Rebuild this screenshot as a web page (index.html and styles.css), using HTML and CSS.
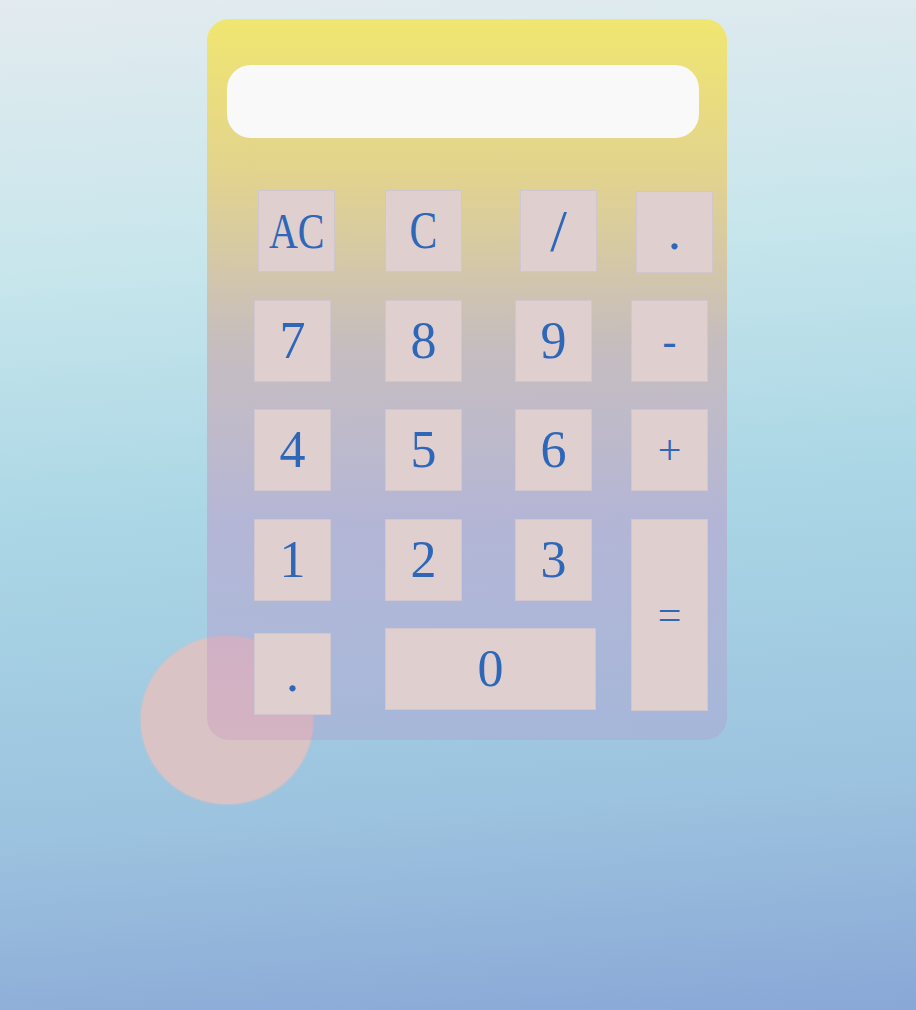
FILE: index.html
```html
<!DOCTYPE html>
<html lang="en">
<head>
<meta charset="utf-8">
<title>Calculator</title>
<link rel="stylesheet" href="styles.css">
</head>
<body>
<div class="blob"></div>
<main class="page">
  <section class="calc">
    <div class="display"></div>
    <div class="keys">
      <button class="key key-ac"><span class="narrow">AC</span></button>
      <button class="key key-c"><span class="narrow">C</span></button>
      <button class="key key-div">/</button>
      <button class="key key-top-dot">.</button>

      <button class="key">7</button>
      <button class="key">8</button>
      <button class="key">9</button>
      <button class="key key-op">-</button>

      <button class="key">4</button>
      <button class="key">5</button>
      <button class="key">6</button>
      <button class="key key-op">+</button>

      <button class="key">1</button>
      <button class="key">2</button>
      <button class="key">3</button>
      <button class="key key-op key-eq">=</button>

      <button class="key key-dot">.</button>
      <button class="key key-zero">0</button>
    </div>
  </section>
</main>
</body>
</html>
```
FILE: styles.css
```css
html, body {
  margin: 0;
  height: 100%;
}

body {
  position: relative;
  overflow: hidden;
  background: linear-gradient(176deg,
    #e3ebef 0%,
    #c8e6ec 25%,
    #aad6e5 50%,
    #9cc3df 78%,
    #8aa7d6 100%);
  font-family: "Liberation Serif", "Times New Roman", serif;
}

.blob {
  position: absolute;
  left: 141px;
  top: 636px;
  width: 172px;
  height: 168px;
  border-radius: 50%;
  background: #d9c3c4;
  box-shadow: 0 0 2px 1px rgba(217, 195, 196, 0.6);
}

.page {
  position: relative;
  padding: 19px 0 0 207px;
}

.calc {
  width: 520px;
  height: 721px;
  box-sizing: border-box;
  border-radius: 22px;
  padding: 46px 28px 0 20px;
  background: linear-gradient(180deg,
    rgba(240, 230, 112, 1) 0%,
    rgba(226, 210, 140, 0.97) 22%,
    rgba(200, 180, 180, 0.8) 45%,
    rgba(190, 150, 200, 0.5) 70%,
    rgba(191, 118, 188, 0.2) 100%);
}

.display {
  height: 73px;
  border-radius: 24px;
  background: #f9f9f9;
}

.keys {
  margin: 52px 0 0 27px;
  display: grid;
  grid-template-columns: 131px 130px 116px 77px;
  grid-template-rows: repeat(5, 82px);
  row-gap: 27.5px;
}

.key {
  width: 77px;
  height: 82px;
  padding: 0;
  margin: 0;
  border: 1px solid rgba(205, 195, 205, 0.8);
  background: #dfcfcf;
  color: #2e67b8;
  font-family: "Liberation Serif", "Times New Roman", serif;
  font-size: 52px;
  line-height: 1;
  display: flex;
  align-items: center;
  justify-content: center;
}

.narrow {
  display: inline-block;
  transform: scaleX(0.8);
}

.key-ac {
  margin-left: 4px;
  font-size: 50px;
}

.key-c {
  font-size: 52px;
}

.key-div {
  margin-left: 5px;
  font-size: 60px;
  font-weight: 300;
}

.key-top-dot {
  margin: 1px 0 0 5px;
}

.key-op {
  font-size: 42px;
}

.key-eq {
  grid-column: 4;
  grid-row: 4 / span 2;
  height: 192px;
}

.key-dot {
  grid-column: 1;
  grid-row: 5;
  margin-top: 5px;
}

.key-zero {
  grid-column: 2 / span 2;
  grid-row: 5;
  width: 211px;
}
```
